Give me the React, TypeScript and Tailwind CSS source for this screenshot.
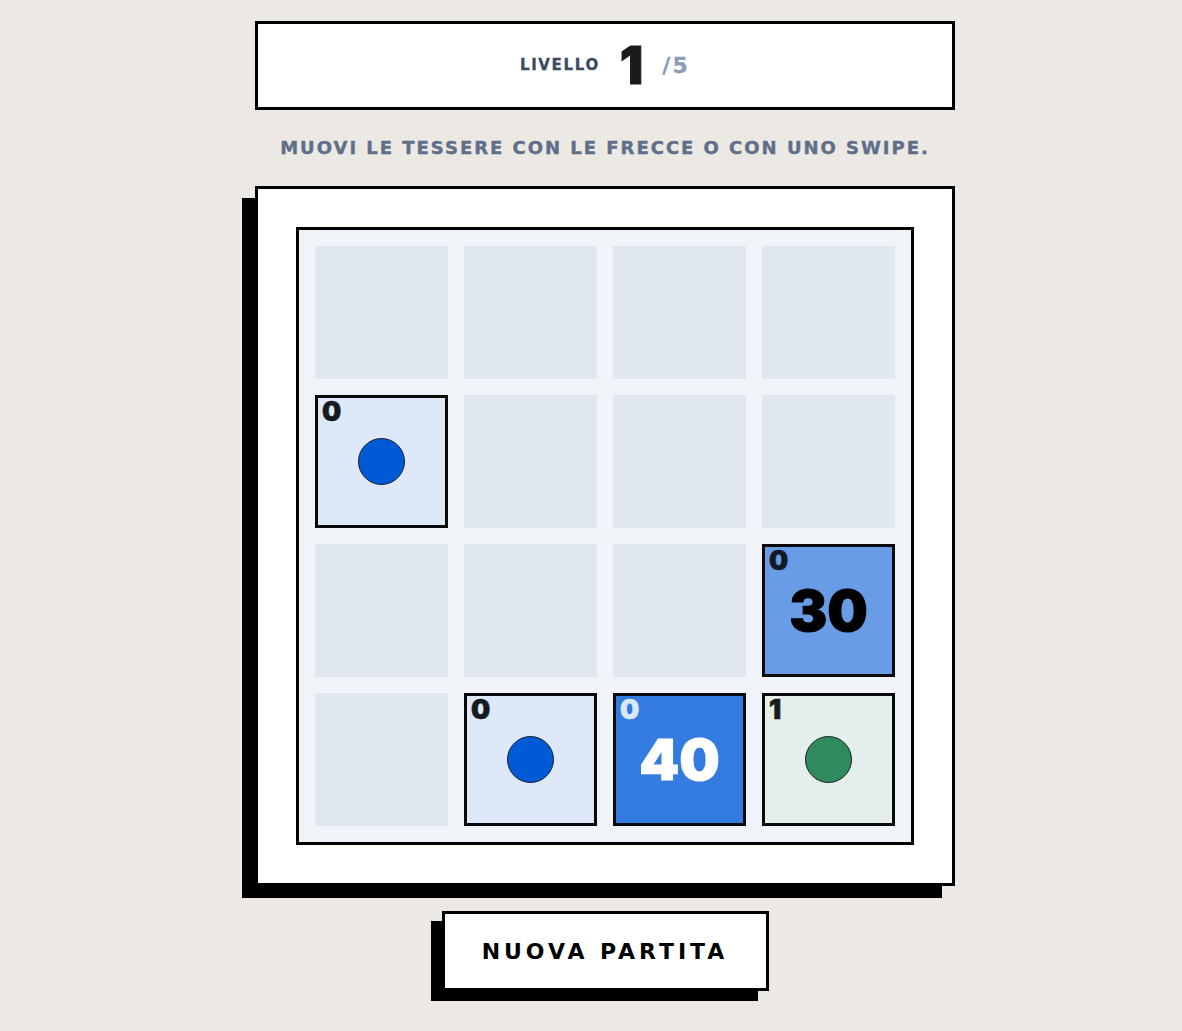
import React from "react";

type Tile =
  | { kind: "empty" }
  | { kind: "dot"; label: string; bg: string; dot: string }
  | { kind: "num"; label: string; bg: string; value: string; fg: string; labelFg: string };

const E: Tile = { kind: "empty" };

const board: Tile[] = [
  E, E, E, E,
  { kind: "dot", label: "0", bg: "bg-[#dde9f8]", dot: "bg-[#005ad6]" }, E, E, E,
  E, E, E, { kind: "num", label: "0", bg: "bg-[#699ce7]", value: "30", fg: "text-black", labelFg: "text-[#111827]" },
  E,
  { kind: "dot", label: "0", bg: "bg-[#dde9f8]", dot: "bg-[#005ad6]" },
  { kind: "num", label: "0", bg: "bg-[#347be0]", value: "40", fg: "text-white", labelFg: "text-[#dbe8fb]" },
  { kind: "dot", label: "1", bg: "bg-[#e5efe9]", dot: "bg-[#2f8a5e]" },
];

const inter = { fontFamily: "Inter, 'DejaVu Sans', sans-serif" };
const wide = { fontFamily: "'DejaVu Sans', Inter, sans-serif" };

function Cell({ t }: { t: Tile }) {
  if (t.kind === "empty") {
    return <div className="h-[133px] w-[133px] bg-[#e1e7ef]" />;
  }
  return (
    <div className={`relative flex h-[133px] w-[133px] items-center justify-center border-[3px] border-[#0a0a0a] ${t.bg}`}>
      <span
        className={`absolute left-[4px] top-[0px] text-[27px] font-black leading-[28px] [-webkit-text-stroke:0.6px_currentColor] ${t.kind === "num" ? t.labelFg : "text-[#161a20]"}`}
      >
        {t.label}
      </span>
      {t.kind === "dot" ? (
        <div className={`h-[47px] w-[47px] rounded-full border border-[#1a1f2b] ${t.dot}`} />
      ) : (
        <span className={`text-[57px] font-black leading-none [-webkit-text-stroke:1px_currentColor] ${t.fg}`}>{t.value}</span>
      )}
    </div>
  );
}

export default function App() {
  return (
    <div className="min-h-[1031px] bg-[#ece8e3]" style={inter}>
      <div className="flex flex-col items-center pl-[28px] pt-[21px]">
        <div className="flex h-[89px] w-[700px] items-center justify-center border-[3px] border-black bg-white">
          <span style={wide} className="text-[15px] font-bold tracking-[0.11em] text-[#3c4a63] [-webkit-text-stroke:0.3px_currentColor]">LIVELLO</span>
          <span className="ml-[20px] text-[52px] font-black leading-none text-[#1b1b1b] [-webkit-text-stroke:1px_currentColor]">1</span>
          <span style={wide} className="ml-[19px] text-[22px] font-bold tracking-[0.1em] text-[#8d9db9] [-webkit-text-stroke:0.3px_currentColor]">/5</span>
        </div>

        <p style={wide} className="mt-[28px] text-[18px] font-bold leading-[20px] tracking-[0.11em] text-[#5f6f89] [-webkit-text-stroke:0.4px_currentColor]">
          MUOVI LE TESSERE CON LE FRECCE O CON UNO SWIPE.
        </p>

        <div className="mt-[28px] flex h-[700px] w-[700px] items-center justify-center border-[3px] border-black bg-white shadow-[-13px_12px_0_0_#000]">
          <div className="grid grid-cols-4 gap-[16px] border-[3px] border-black bg-[#f0f4f8] p-[16px]">
            {board.map((t, i) => (
              <Cell key={i} t={t} />
            ))}
          </div>
        </div>

        <button
          style={wide}
          className="mt-[25px] flex h-[80px] w-[327px] items-center justify-center border-[3px] border-black bg-white text-[22px] font-bold tracking-[0.18em] text-black shadow-[-11px_10px_0_0_#000]"
        >
          NUOVA PARTITA
        </button>
      </div>
    </div>
  );
}
